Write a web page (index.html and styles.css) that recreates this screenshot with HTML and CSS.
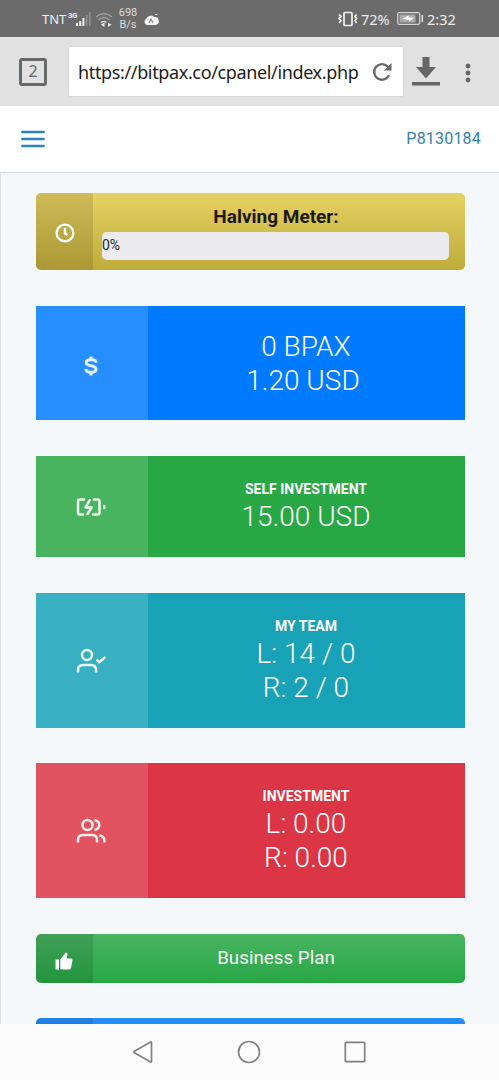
FILE: index.html
```html
<!DOCTYPE html>
<html lang="en">
<head>
<meta charset="utf-8">
<meta name="viewport" content="width=device-width, initial-scale=1">
<title>Bitpax</title>
<link rel="stylesheet" href="styles.css">
</head>
<body>
<div class="screen">
  <div class="status">
    <span class="carrier">TNT</span>
    <svg class="signal" width="24" height="18" viewBox="0 0 24 18">
      <text x="0" y="7.5" class="tiny">3G</text>
      <path d="M9 16v-3M12.2 16v-5M15.4 16V8" stroke="#f4f4f4" stroke-width="2"/>
      <path d="M18.6 16V5M21.8 16V2" stroke="#929292" stroke-width="1.6"/>
    </svg>
    <svg class="wifi" width="18" height="16" viewBox="0 0 18 16" fill="none" stroke-width="1.4">
      <path d="M1 5Q9-2 17 5M3.5 8Q9 3 14.5 8" stroke="#a2a2a2"/>
      <path d="M6 10.5q3-2 5 0" stroke="#ddd"/>
      <path d="M9.500 10.500v4.500l-3.500-2.200zM13 10.500v4.500l3.500-2.200z" fill="#eee"/>
    </svg>
    <span class="speed">698<br>B/s</span>
    <svg class="cloud" width="16" height="13" viewBox="0 0 16 13">
      <path d="M4 12a3.500 3.500 0 0 1-.5-6.500A4.500 4.500 0 0 1 11 4a4 4 0 0 1 1.500 8z" fill="#f4f4f4"/>
      <path d="M6 10l2-4 2 4" fill="none" stroke="#888" stroke-width="1.200"/>
      <path d="M12 1.500h2.500" stroke="#ddd"/>
    </svg>
    <svg class="vibrate" width="20" height="16" viewBox="0 0 20 16" fill="none" stroke="#f4f4f4" stroke-width="1.700">
      <rect x="6" y="1.500" width="8" height="13" rx="1"/>
      <path d="M1 3.500l2 2-2 2 2 2-2 2.500M18.500 3.500l-1.500 2 1.500 2-1.500 2 1.500 2.500"/>
    </svg>
    <span class="percent">72%</span>
    <svg class="battery" width="27" height="13" viewBox="0 0 27 13">
      <rect x=".7" y=".7" width="22" height="11.600" rx="1.500" fill="none" stroke="#d5d5d5" stroke-width="1.200"/>
      <rect x="2.500" y="2.500" width="16" height="8" fill="#aaa"/>
      <path d="M5 7l6.500-3.500v2H17L12 10V8z" fill="#fff"/>
      <path d="M25.300 3v7" stroke="#ddd" stroke-width="1.500"/>
    </svg>
    <span class="time">2:32</span>
  </div>

  <div class="browser">
    <span class="tabs">2</span>
    <div class="address">
      <span class="url">https://bitpax.co/cpanel/index.php</span>
      <svg width="20" height="20" viewBox="0 0 20 20">
        <path d="M17 13.300A7.800 7.800 0 1 1 15.600 4.500L17 6" fill="none" stroke="#686868" stroke-width="2.400"/>
        <path d="M19.500 1v7.500H12z" fill="#686868"/>
      </svg>
    </div>
    <svg class="download" width="28" height="29" viewBox="0 0 28 29" fill="#666">
      <path d="M10.500 0h7v10H24L14 21.500 4 10h6.500zM0 25h28v3.500H0z"/>
    </svg>
    <svg class="more" width="6" height="20" viewBox="0 0 6 20" fill="#666">
      <circle cx="3" cy="3" r="2.400"/><circle cx="3" cy="10" r="2.400"/><circle cx="3" cy="17" r="2.400"/>
    </svg>
  </div>

  <header class="header">
    <svg width="24" height="18" viewBox="0 0 24 18"><path d="M1.200 2h21.600M1.200 9h21.600M1.200 16h21.600" stroke="#2d83bd" stroke-width="2.300" stroke-linecap="round"/></svg>
    <span class="user">P8130184</span>
  </header>

  <main class="content">
    <section class="bar meter">
      <div class="bar-icon">
        <svg class="clock" width="20" height="20" viewBox="0 0 20 20" fill="none" stroke="#fff" stroke-width="2.400"><circle cx="10" cy="10" r="8.400"/><path d="M10 5v5.500l2.500 1.500"/></svg>
      </div>
      <div class="bar-body">
        <h2 class="meter-title">Halving Meter:</h2>
        <div class="progress">0%</div>
      </div>
    </section>

    <section class="card blue">
      <div class="card-icon"><svg class="dollar" width="14" height="20" viewBox="0 0 14 20" fill="none" stroke="#e4f7ff" stroke-width="3"><path d="M12 6.800V6C12 4.500 10.500 3.700 7 3.700S2.200 4.500 2.200 6.600C2.200 8.800 4 9.300 7 9.800s5 1.200 5 3.600c0 2.200-2 2.900-5 2.900s-5-.8-5-2.700V13M7 .5v3M7 16v3.500"/></svg></div>
      <div class="card-body"><p class="value">0 BPAX</p><p class="value amount">1.20 USD</p></div>
    </section>

    <section class="card green">
      <div class="card-icon"><svg width="30" height="20" viewBox="0 0 30 20" fill="none" stroke="#effff0" stroke-width="2.500" stroke-linejoin="round" stroke-linecap="round"><path d="M8 2.500H4Q2 2.500 2 4.500v11q0 2 2 2h3M18 2.500h3.500q2 0 2 2v11q0 2-2 2H17M13.800 3L9.500 10.500h6L11.500 17M28.300 9v2"/></svg></div>
      <div class="card-body"><h3 class="label">SELF INVESTMENT</h3><p class="value">15.00 USD</p></div>
    </section>

    <section class="card teal">
      <div class="card-icon"><svg width="30" height="26" viewBox="0 0 30 26" fill="none" stroke="#e9ffff" stroke-width="2.500" stroke-linejoin="round"><circle cx="11" cy="7" r="5"/><path d="M2 24.500V22q0-5 5-5h8q5 0 5 5v2.500M20.500 11.500l3 2.700 5.700-5.200"/></svg></div>
      <div class="card-body"><h3 class="label">MY TEAM</h3><p class="value">L: 14 / 0</p><p class="value">R: 2 / 0</p></div>
    </section>

    <section class="card red">
      <div class="card-icon"><svg width="30" height="26" viewBox="0 0 30 26" fill="none" stroke="#fff0ee" stroke-width="2.500"><circle cx="11.500" cy="7" r="5"/><path d="M2 24.500V22q0-5 5-5h9q5 0 5 5v2.500M18.500 2q4.800 1.200 4.800 5t-4.800 5M23.500 17.300q4.800 1.200 4.800 5v2.200"/></svg></div>
      <div class="card-body"><h3 class="label">INVESTMENT</h3><p class="value">L: 0.00</p><p class="value">R: 0.00</p></div>
    </section>

    <section class="bar plan">
      <div class="bar-icon"><svg class="thumb" width="18" height="18" viewBox="0 0 18 18" fill="#fff"><path d="M.5 7.500h3.500v10H.5zM5.300 7.500L10 1.500q.5-1.200 1.800-.8 1 .4.700 1.800l-.9 4H16q1.800 0 1.500 2l-1.500 7.500q-.5 1.500-2 1.500H7.500q-1 0-2.200-1z"/></svg></div>
      <div class="bar-body plan-title">Business Plan</div>
    </section>

    <section class="bar next"><div class="bar-icon"></div></section>
  </main>

  <nav class="nav">
    <svg width="22" height="24" viewBox="0 0 22 24"><path d="M19.500 2.500v19q0 .8-.8.400L2.300 12.700q-1-.7 0-1.400L18.700 2q.8-.3.800.5z"/></svg>
    <svg width="24" height="24" viewBox="0 0 24 24"><circle cx="12" cy="12" r="10.500"/></svg>
    <svg width="22" height="22" viewBox="0 0 22 22"><rect x="1.300" y="1.300" width="19.400" height="19.400" rx=".8"/></svg>
  </nav>
</div>
</body>
</html>
```
FILE: styles.css
```css
* { box-sizing: border-box; }
body, h2, h3, p { margin: 0; }
body { font-family: Roboto, "Liberation Sans", sans-serif; }
svg { display: block; flex: none; }

.screen { width: 499px; height: 1080px; display: flex; flex-direction: column; overflow: hidden; background: #fff; }

.status { height: 37px; flex: none; display: flex; align-items: center; background: #6b6b6b; color: #ededed; padding-left: 42px; font: 14.5px "Noto Sans", sans-serif; white-space: nowrap; }
.carrier { width: 26px; font-size: 13px; }
.tiny { font: bold 7.5px Roboto, sans-serif; fill: #f4f4f4; }
.wifi { margin: 3px 0 0 3px; }
.speed { width: 20px; margin-left: 5px; font: 11px/12px Roboto, sans-serif; text-align: center; color: #ddd; }
.cloud { margin: 2px 0 0 5px; }
.vibrate { margin-left: 179px; }
.percent { width: 34px; margin-left: 3px; }
.battery { margin-left: 2px; }
.time { margin-left: 3px; }

.browser { height: 69px; flex: none; display: flex; align-items: center; padding-left: 19px; background: #e1e1e1; }
.tabs { width: 28px; height: 28px; margin-top: 1px; border: 3px solid #686868; border-radius: 3px; color: #666; font: 16px/21px "Noto Sans", sans-serif; text-align: center; }
.address { width: 336px; height: 51px; margin-left: 21px; padding: 0 11px 0 9px; display: flex; align-items: center; justify-content: space-between; background: #fff; border: 1px solid #d8d8d8; border-radius: 2px; }
.url { color: #1c1c1c; font: 18px "Noto Sans", sans-serif; letter-spacing: -.36px; white-space: nowrap; }
.download { margin-left: 8px; }
.more { margin: 3px 0 0 25px; }

.header { height: 67px; flex: none; display: flex; align-items: center; justify-content: space-between; padding: 0 18px 1px 21px; border-bottom: 1px solid #d6dde2; }
.user { color: #3480b0; font-size: 16px; letter-spacing: .2px; }

.content { height: 851px; flex: none; display: flex; flex-direction: column; padding: 20px 34px 0 35px; background: #f5f8fb; border-left: 1px solid #dfe3e8; overflow: hidden; }

.bar { flex: none; display: flex; border-radius: 5px; overflow: hidden; }
.bar-icon { width: 57px; flex: none; display: flex; align-items: center; justify-content: center; background: rgba(0, 0, 0, .11); }
.bar-body { flex: 1; }
.clock { margin-top: 2px; }
.meter { height: 77px; background: linear-gradient(#e6d262, #c0ac3b); }
.meter-title { height: 39px; padding-right: 6px; color: #1d180d; font-size: 19px; font-weight: 700; line-height: 48px; text-align: center; }
.progress { height: 28px; margin: 0 16px 0 9px; border-radius: 5px; background: #ececf0; color: #252525; font-size: 14px; line-height: 27px; }

.card { flex: none; display: flex; margin-top: 36px; }
.card-icon { width: 112px; padding-right: 2px; flex: none; display: flex; align-items: center; justify-content: center; background: rgba(255, 255, 255, .15); }
.card-body { flex: 1; padding-right: 1px; display: flex; flex-direction: column; align-items: center; justify-content: center; color: #fff; }
.dollar { margin-top: 6px; }
.label { font-size: 14px; font-weight: 700; line-height: 21px; }
.value { font-size: 28px; font-weight: 300; line-height: 33.6px; }
.amount { padding-right: 6px; }
.blue { height: 114px; background: #007bff; }
.blue .card-body { padding-top: 1px; }
.green { height: 101px; background: #28a745; }
.teal { height: 135px; background: #17a2b8; }
.red { height: 135px; margin-top: 35px; background: #dc3545; }

.plan { height: 49px; margin-top: 36px; background: linear-gradient(#48b461, #28a745); }
.thumb { margin: 4px 2px 0 0; }
.plan-title { padding-right: 6px; color: #f4fff5; font-size: 18.8px; line-height: 49px; text-align: center; }
.next { height: 49px; margin-top: 35px; background: linear-gradient(#268fff, #007bff); }

.nav { height: 56px; flex: none; display: flex; align-items: center; justify-content: center; gap: 83px; padding-right: 2px; background: #fcfcfc; }
.nav svg { fill: none; stroke: #808080; stroke-width: 1.700; }
```
